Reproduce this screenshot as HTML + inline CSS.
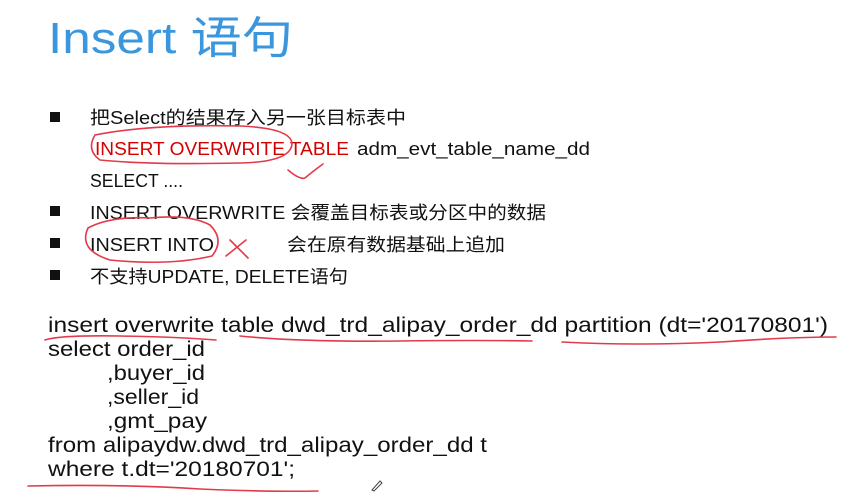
<!DOCTYPE html>
<html><head><meta charset="utf-8"><style>
html,body{margin:0;padding:0;background:#fff;width:861px;height:499px;overflow:hidden}
svg{display:block}
text{font-family:"Liberation Sans","Noto Sans CJK SC",sans-serif}
</style></head><body>
<svg width="861" height="499" viewBox="0 0 861 499" xmlns="http://www.w3.org/2000/svg">
<text x="48" y="53" font-size="44" fill="#3a96dd" textLength="245" lengthAdjust="spacingAndGlyphs">Insert 语句</text>
<g fill="#111">
<rect x="50" y="112" width="10" height="10"/>
<rect x="50" y="206" width="10" height="10"/>
<rect x="50" y="238" width="10" height="10"/>
<rect x="50" y="270" width="10" height="10"/>
</g>
<g font-size="18" fill="#111">
<text x="90" y="124" textLength="316" lengthAdjust="spacingAndGlyphs">把Select的结果存入另一张目标表中</text>
<text x="95" y="155" fill="#d40000" textLength="254" lengthAdjust="spacingAndGlyphs">INSERT OVERWRITE TABLE</text>
<text x="357" y="155" textLength="233" lengthAdjust="spacingAndGlyphs">adm_evt_table_name_dd</text>
<text x="90" y="187" textLength="93" lengthAdjust="spacingAndGlyphs">SELECT ....</text>
<text x="90" y="219" textLength="456" lengthAdjust="spacingAndGlyphs">INSERT OVERWRITE 会覆盖目标表或分区中的数据</text>
<text x="90" y="251" textLength="124" lengthAdjust="spacingAndGlyphs">INSERT INTO</text>
<text x="287" y="251" textLength="218" lengthAdjust="spacingAndGlyphs">会在原有数据基础上追加</text>
<text x="90" y="283" textLength="258" lengthAdjust="spacingAndGlyphs">不支持UPDATE, DELETE语句</text>
</g>
<g font-size="21" fill="#111">
<text x="48" y="332" textLength="780" lengthAdjust="spacingAndGlyphs">insert overwrite table dwd_trd_alipay_order_dd partition (dt='20170801')</text>
<text x="48" y="356" textLength="157" lengthAdjust="spacingAndGlyphs">select order_id</text>
<text x="107" y="380" textLength="98" lengthAdjust="spacingAndGlyphs">,buyer_id</text>
<text x="107" y="404" textLength="92" lengthAdjust="spacingAndGlyphs">,seller_id</text>
<text x="107" y="428" textLength="100" lengthAdjust="spacingAndGlyphs">,gmt_pay</text>
<text x="48" y="452" textLength="439" lengthAdjust="spacingAndGlyphs">from alipaydw.dwd_trd_alipay_order_dd t</text>
<text x="48" y="476" textLength="247" lengthAdjust="spacingAndGlyphs">where t.dt='20180701';</text>
</g>
<g fill="none" stroke="#e23a4a" stroke-width="1.6" stroke-linecap="round">
<path d="M45 340 Q60 335 120 336 Q180 337 216 340"/>
<path d="M240 336 Q300 342 400 341 Q480 340 532 341"/>
<path d="M562 342 Q640 346 720 342 Q790 337 836 337"/>
<path d="M28 486 Q120 484 200 489 Q270 492 318 491"/>
<path d="M95 135 Q150 124 240 126 Q290 128 292 143 Q292 162 240 163 Q150 165 100 160 Q86 150 95 135"/>
<path d="M288 170 Q300 180 305 178 Q312 172 323 164"/>
<path d="M150 218 Q110 216 88 228 Q78 250 110 260 Q170 266 212 256 Q225 240 210 225 Q190 214 150 218"/>
<path d="M226 256 L246 240 M230 240 L248 258"/>
</g>
<path d="M372 490 L380 481 L382 483 L374 491 Z" fill="none" stroke="#444" stroke-width="1"/>
</svg>
</body></html>
